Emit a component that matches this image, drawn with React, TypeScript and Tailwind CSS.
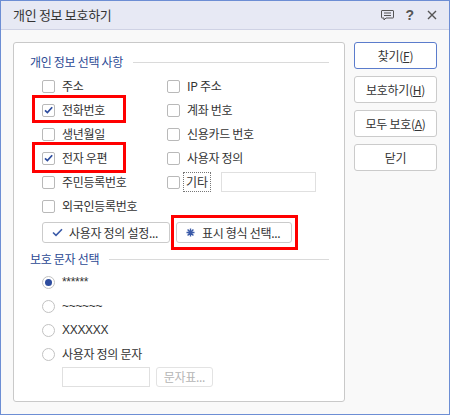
import React from "react";

const FONT = "font-['Noto_Sans_CJK_KR','Noto_Sans',sans-serif]";

function Box({ checked }: { checked?: boolean }) {
  return (
    <span className="w-[13px] h-[13px] border border-[#b9b9b9] rounded-[2px] bg-white flex items-center justify-center shrink-0">
      {checked && (
        <svg width="9" height="8" viewBox="0 0 9 8">
          <path d="M1 4.3 L3.4 6.6 L8.2 1.2" stroke="#2d4c9e" strokeWidth="1.7" fill="none" />
        </svg>
      )}
    </span>
  );
}

function Item({ label, checked, red }: { label: string; checked?: boolean; red?: "a" | "b" }) {
  return (
    <div className="relative h-[24px] flex items-center gap-[7px]">
      <Box checked={checked} />
      <span className="text-[12px] leading-[16px] text-[#333] tracking-[-0.3px]">{label}</span>
      {red === "a" && (
        <div className="absolute left-[-10px] top-[-3px] w-[94px] h-[28px] border-[3px] border-[#ff0000]" />
      )}
      {red === "b" && (
        <div className="absolute left-[-10px] top-[-4px] w-[94px] h-[31px] border-[3px] border-[#ff0000]" />
      )}
    </div>
  );
}

function Radio({ label, on, latin }: { label: string; on?: boolean; latin?: boolean }) {
  return (
    <div className="h-[24px] flex items-center gap-[7px]">
      <span className="w-[13px] h-[13px] rounded-full border border-[#c2c2c2] bg-white flex items-center justify-center shrink-0">
        {on && <span className="w-[7px] h-[7px] rounded-full bg-[#2d4c9e]" />}
      </span>
      <span
        className={`text-[12px] leading-[16px] text-[#333] tracking-[-0.3px] ${
          latin ? "font-['Liberation_Sans',sans-serif]" : ""
        }`}
      >
        {label}
      </span>
    </div>
  );
}

function SideButton({ children, primary }: { children: React.ReactNode; primary?: boolean }) {
  return (
    <div
      className={`h-[27px] w-full bg-white rounded-[3px] flex items-center justify-center text-[12px] leading-[16px] text-[#333] tracking-[-0.3px] ${
        primary ? "border-[1.5px] border-[#5b7ccc]" : "border border-[#cbcbcb]"
      }`}
    >
      {children}
    </div>
  );
}

function Heading({ text }: { text: string }) {
  return (
    <div className="h-[16px] flex items-center">
      <span className="text-[12px] leading-[16px] text-[#2c4a94] tracking-[-0.3px]">{text}</span>
      <div className="flex-1 h-px bg-[#dadada] ml-[10px]" />
    </div>
  );
}

export default function App() {
  return (
    <div className={`w-[450px] h-[415px] border border-[#6d8ed4] bg-[#f9f9f9] flex flex-col ${FONT}`}>
      {/* title bar */}
      <div className="h-[29px] bg-[#e7e9f4] border-b border-[#cfd2e4] flex items-center pl-[12px] pr-[12px] shrink-0">
        <span className="text-[13px] leading-[16px] text-[#333] tracking-[-0.3px]">개인 정보 보호하기</span>
        <div className="ml-auto flex items-center">
          <svg width="13" height="11" viewBox="0 0 13 11" className="mr-[11px]">
            <path d="M1 0.5 H12 Q12.5 0.5 12.5 1 V7.5 Q12.5 8 12 8 H5 L3 10 V8 H1 Q0.5 8 0.5 7.5 V1 Q0.5 0.5 1 0.5 Z" stroke="#555" strokeWidth="1" fill="none" />
            <path d="M3 3 H10 M3 5.5 H10" stroke="#555" strokeWidth="1" />
          </svg>
          <span className="text-[14px] font-semibold leading-[16px] text-[#555] mr-[13px] font-['Liberation_Sans',sans-serif]">?</span>
          <svg width="10" height="10" viewBox="0 0 10 10">
            <path d="M1 1 L9 9 M9 1 L1 9" stroke="#555" strokeWidth="1.4" />
          </svg>
        </div>
      </div>

      {/* body */}
      <div className="flex pt-[12px] pl-[12px] pr-[12px] gap-[9px]">
        <div className="w-[332px] h-[360px] bg-white border border-[#c9c9c9] rounded-[3px] pt-[11px] pl-[16px] pr-[15px]">
          <Heading text="개인 정보 선택 사항" />
          <div className="mt-[4px] pl-[12px] grid grid-cols-[125px_1fr]">
            <Item label="주소" />
            <Item label="IP 주소" />
            <Item label="전화번호" checked red="a" />
            <Item label="계좌 번호" />
            <Item label="생년월일" />
            <Item label="신용카드 번호" />
            <Item label="전자 우편" checked red="b" />
            <Item label="사용자 정의" />
            <Item label="주민등록번호" />
            <div className="h-[24px] flex items-center">
              <Box />
              <span className="ml-[3px] h-[20px] px-[2px] border border-dotted border-[#777] flex items-center text-[12px] leading-[16px] text-[#333]">
                기타
              </span>
              <div className="ml-[10px] w-[95px] h-[20px] border border-[#e0e0e0] bg-white" />
            </div>
            <Item label="외국인등록번호" />
            <div />
          </div>
          <div className="mt-[4px] pl-[12px] flex gap-[6px]">
            <div className="w-[128px] h-[21px] border border-[#cbcbcb] rounded-[3px] bg-white flex items-center pl-[9px] gap-[6px]">
              <svg width="11" height="9" viewBox="0 0 11 9">
                <path d="M1 4.5 L4 7.3 L10 1.3" stroke="#3a5aa8" strokeWidth="1.6" fill="none" />
              </svg>
              <span className="text-[12px] leading-[16px] text-[#333] tracking-[-0.3px]">사용자 정의 설정...</span>
            </div>
            <div className="relative w-[116px] h-[21px] border border-[#cbcbcb] rounded-[3px] bg-white flex items-center pl-[9px] gap-[7px]">
              <svg width="9" height="9" viewBox="0 0 9 9">
                <path d="M4.5 0.5 V8.5 M0.5 4.5 H8.5 M1.6 1.6 L7.4 7.4 M7.4 1.6 L1.6 7.4" stroke="#3a5aa8" strokeWidth="1.4" />
              </svg>
              <span className="text-[12px] leading-[16px] text-[#333] tracking-[-0.3px]">표시 형식 선택...</span>
              <div className="absolute left-[-6px] top-[-8px] w-[127px] h-[35px] border-[3px] border-[#ff0000]" />
            </div>
          </div>
          <div className="mt-[8px]">
            <Heading text="보호 문자 선택" />
          </div>
          <div className="mt-[3px] pl-[12px]">
            <Radio label="******" on latin />
            <Radio label="~~~~~~" latin />
            <Radio label="XXXXXX" latin />
            <Radio label="사용자 정의 문자" />
            <div className="mt-[1px] ml-[20px] flex gap-[6px]">
              <div className="w-[88px] h-[20px] border border-[#e0e0e0] bg-white" />
              <div className="w-[57px] h-[20px] border border-[#e3e3e3] rounded-[3px] bg-white flex items-center justify-center text-[12px] leading-[16px] text-[#b5b5b5] tracking-[-0.3px]">
                문자표...
              </div>
            </div>
          </div>
        </div>

        <div className="w-[83px] flex flex-col gap-[7px]">
          <SideButton primary>
            찾기(<span className="underline">F</span>)
          </SideButton>
          <SideButton>
            보호하기(<span className="underline">H</span>)
          </SideButton>
          <SideButton>
            모두 보호(<span className="underline">A</span>)
          </SideButton>
          <SideButton>닫기</SideButton>
        </div>
      </div>
    </div>
  );
}
